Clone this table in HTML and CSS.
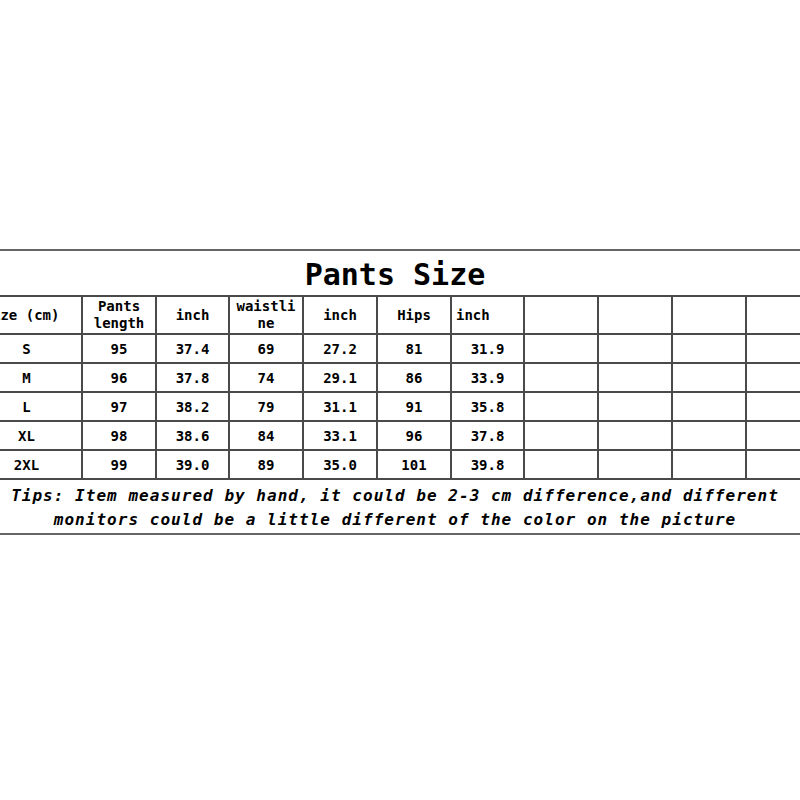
FILE: index.html
```html
<!DOCTYPE html>
<html lang="en">
<head>
<meta charset="utf-8">
<title>Pants Size</title>
<link rel="stylesheet" href="styles.css">
</head>
<body>
<div class="sheet">
  <div class="title">Pants Size</div>
  <table class="chart">
    <colgroup>
      <col class="c-size">
      <col class="c74"><col class="c73"><col class="c74"><col class="c74"><col class="c74">
      <col class="c73"><col class="c74"><col class="c74"><col class="c74"><col class="c74">
    </colgroup>
    <thead>
      <tr class="head">
        <th class="first">Size (cm)</th>
        <th>Pants<br>length</th>
        <th>inch</th>
        <th class="wrap">waistli<br>ne</th>
        <th>inch</th>
        <th>Hips</th>
        <th class="left">inch</th>
        <th></th><th></th><th></th><th></th>
      </tr>
    </thead>
    <tbody>
      <tr><td>S</td><td>95</td><td>37.4</td><td>69</td><td>27.2</td><td>81</td><td>31.9</td><td></td><td></td><td></td><td></td></tr>
      <tr><td>M</td><td>96</td><td>37.8</td><td>74</td><td>29.1</td><td>86</td><td>33.9</td><td></td><td></td><td></td><td></td></tr>
      <tr><td>L</td><td>97</td><td>38.2</td><td>79</td><td>31.1</td><td>91</td><td>35.8</td><td></td><td></td><td></td><td></td></tr>
      <tr><td>XL</td><td>98</td><td>38.6</td><td>84</td><td>33.1</td><td>96</td><td>37.8</td><td></td><td></td><td></td><td></td></tr>
      <tr><td>2XL</td><td>99</td><td>39.0</td><td>89</td><td>35.0</td><td>101</td><td>39.8</td><td></td><td></td><td></td><td></td></tr>
    </tbody>
  </table>
  <div class="tips">
    <p>Tips: Item measured by hand, it could be 2-3 cm difference,and different</p>
    <p>monitors could be a little different of the color on the picture</p>
  </div>
</div>
</body>
</html>
```

FILE: styles.css
```css
html, body {
  margin: 0;
  padding: 0;
  background: #fff;
}

body {
  font-family: "DejaVu Sans Mono", "Liberation Mono", monospace;
  color: #000;
}

.sheet {
  width: 800px;
  overflow: hidden;
  margin-top: 249px;
}

.title {
  border-top: 2px solid #666;
  height: 44px;
  padding-top: 2px;
  line-height: 44px;
  font-size: 30px;
  font-weight: bold;
  text-align: center;
  padding-right: 10px;
  box-sizing: border-box;
  height: 46px;
}

.chart {
  border-collapse: collapse;
  table-layout: fixed;
  width: 849px;
  margin-left: -30px;
  font-size: 14px;
  font-weight: bold;
}

.c-size { width: 111px; }
.c74 { width: 74px; }
.c73 { width: 73px; }

.chart th,
.chart td {
  border: 2px solid #4a4a4a;
  padding: 0;
  text-align: center;
  vertical-align: middle;
  font-weight: bold;
  white-space: nowrap;
}

.chart .head th {
  height: 36px;
  line-height: 17px;
}

.chart .head th.first {
  padding-right: 10px;
}

.chart .head th.left {
  text-align: left;
  padding-left: 4px;
}

.chart tbody td {
  height: 27px;
}

.tips {
  border-bottom: 2px solid #666;
  padding: 4px 10px 1px 0;
  text-align: center;
  font-size: 16px;
  font-weight: bold;
  font-style: italic;
  letter-spacing: 1.03px;
  line-height: 24px;
}

.tips p {
  margin: 0;
  white-space: nowrap;
}
```
